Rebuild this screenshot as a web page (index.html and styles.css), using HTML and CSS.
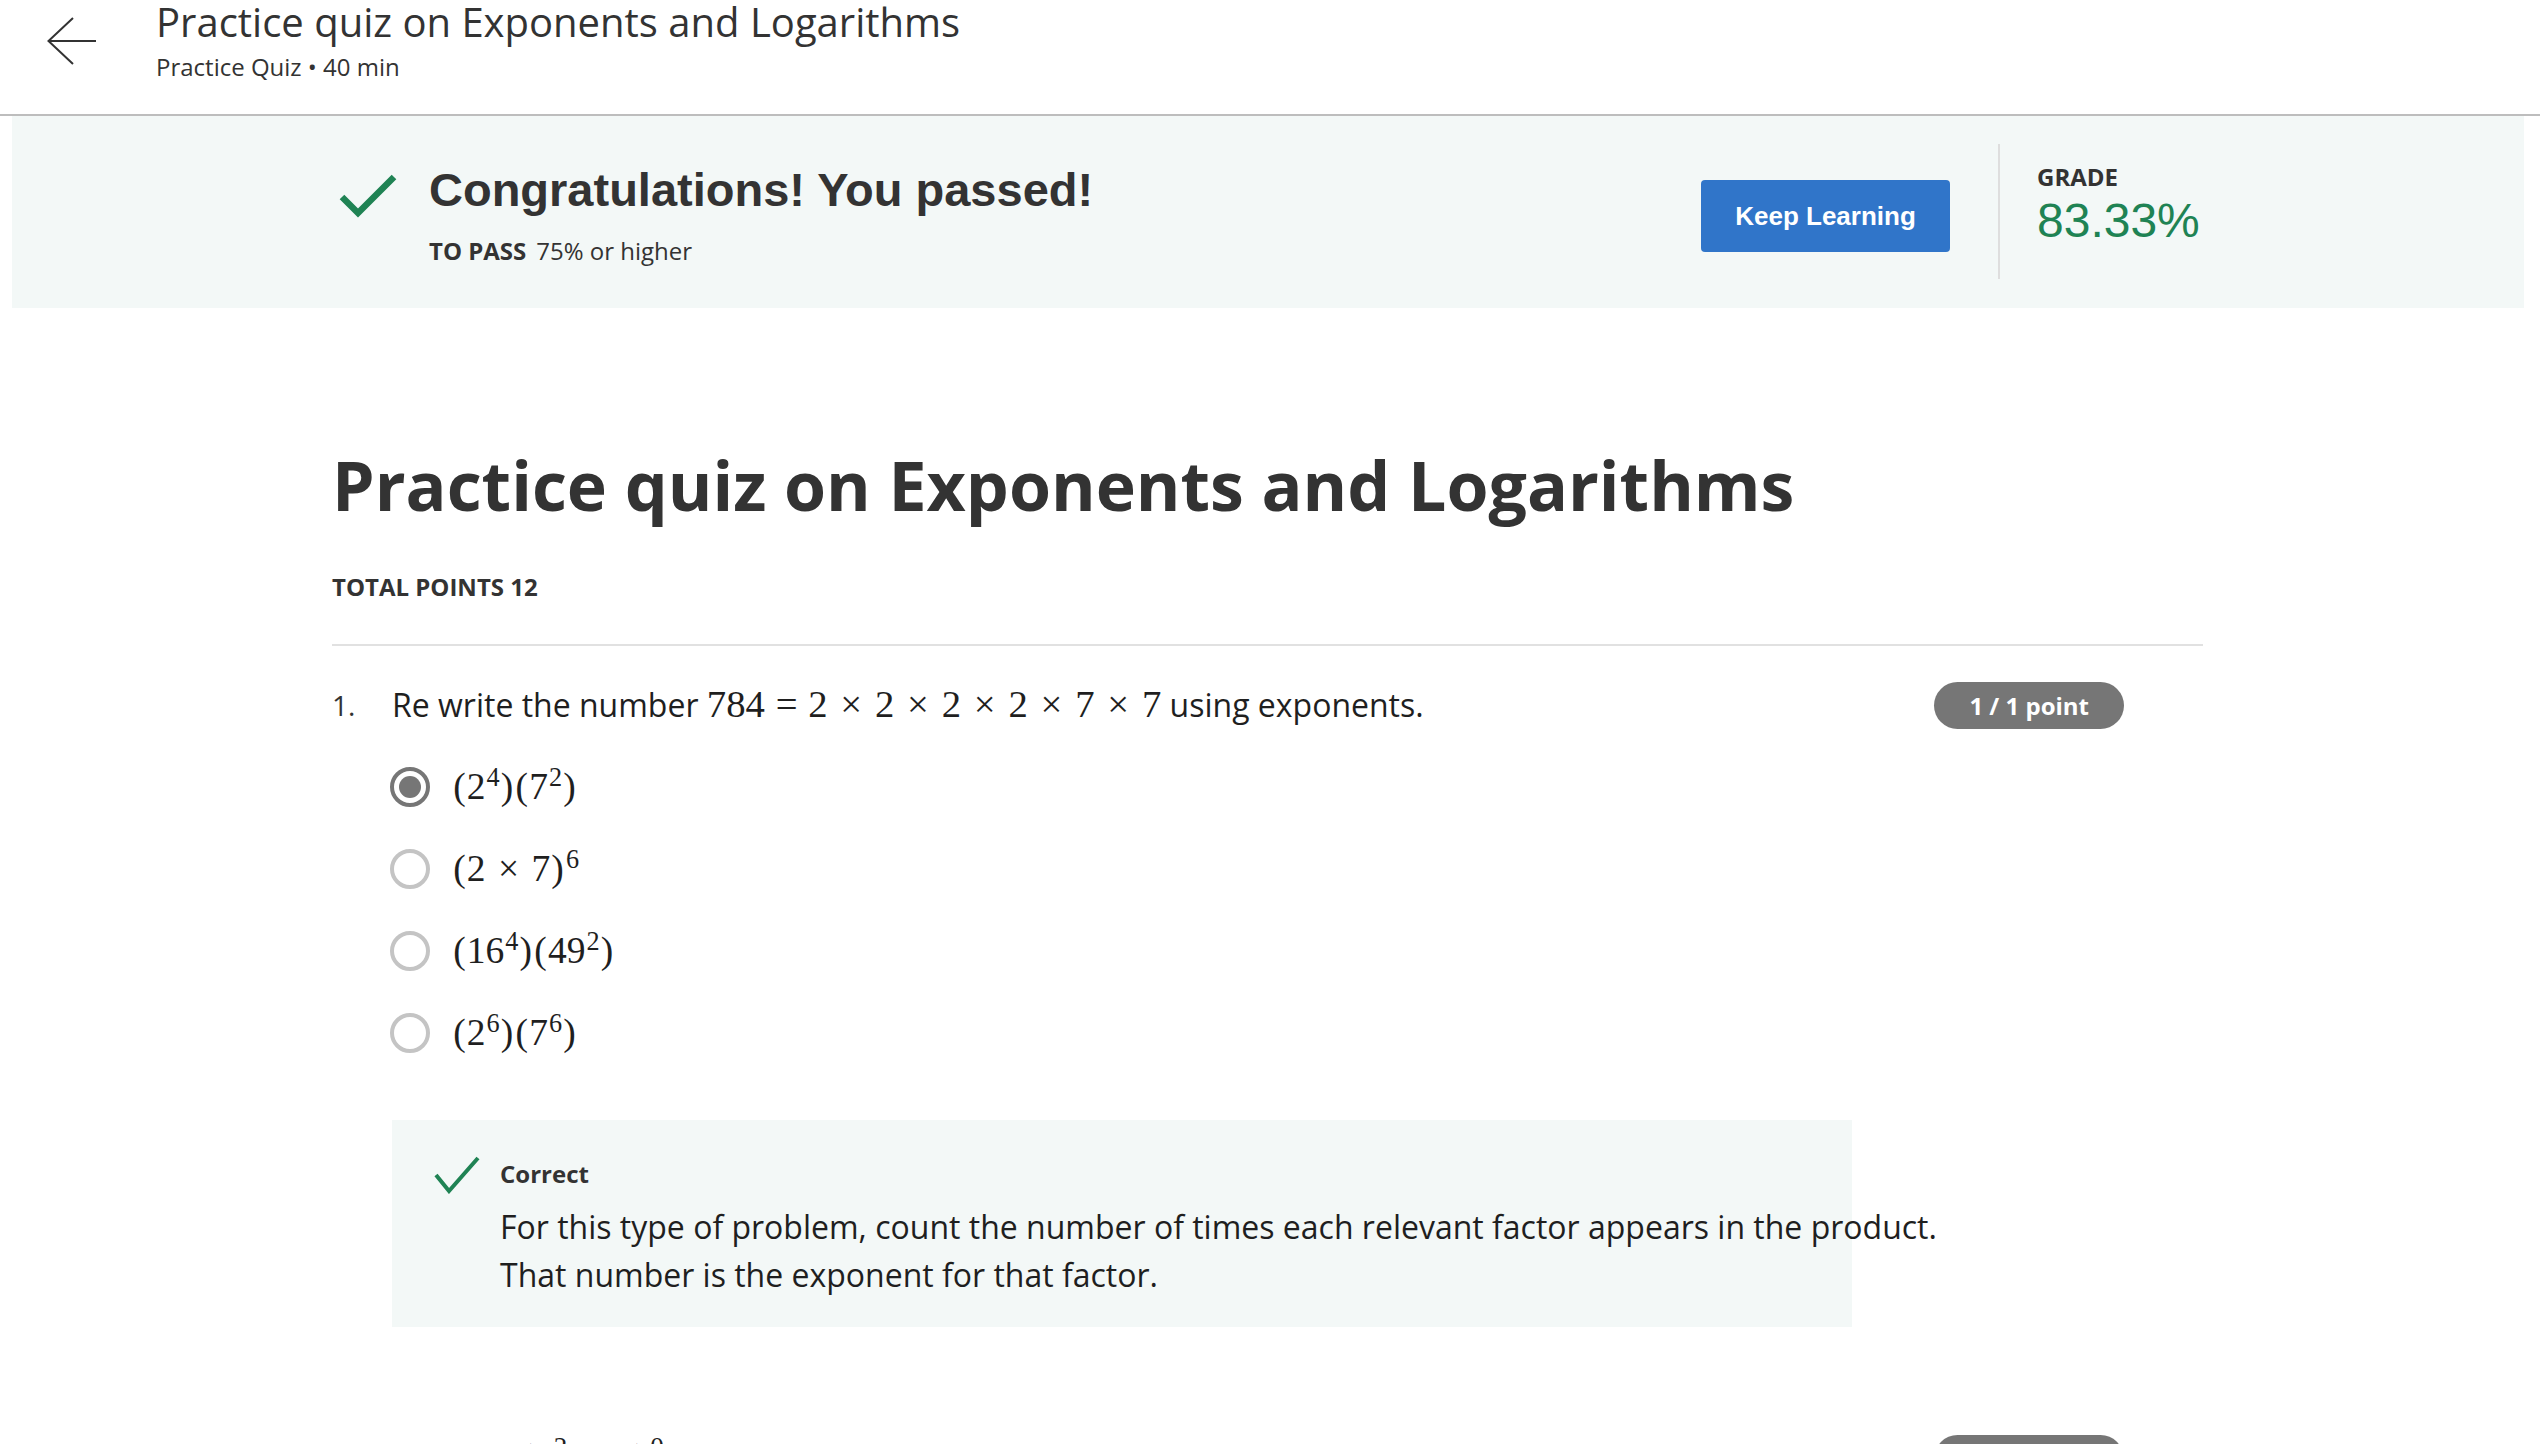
FILE: index.html
```html
<!DOCTYPE html>
<html lang="en">
<head>
<meta charset="utf-8">
<title>Practice quiz on Exponents and Logarithms</title>
<link rel="stylesheet" href="styles.css">
</head>
<body>
<header class="topbar">
  <a class="back" href="#" aria-label="Back">
    <svg width="50" height="48" viewBox="0 0 50 48"><path d="M1 24 H49 M26 1 L1.5 24 L26 47" fill="none" stroke="#333" stroke-width="2"/></svg>
  </a>
  <div class="topbar-text">
    <div class="topbar-title">Practice quiz on Exponents and Logarithms</div>
    <div class="topbar-sub">Practice Quiz • 40 min</div>
  </div>
</header>

<section class="banner">
  <div class="banner-inner">
    <svg class="pass-check" width="58" height="46" viewBox="0 0 58 46"><path d="M3 25 L19 41 L55 5" fill="none" stroke="#1f8354" stroke-width="6.5"/></svg>
    <div class="pass-text">
      <div class="pass-title">Congratulations! You passed!</div>
      <div class="pass-req"><b>TO PASS</b>75% or higher</div>
    </div>
    <button class="keep">Keep Learning</button>
    <div class="vdiv"></div>
    <div class="grade">
      <div class="grade-label">GRADE</div>
      <div class="grade-value">83.33%</div>
    </div>
  </div>
</section>

<main class="content">
  <h1 class="quiz-title">Practice quiz on Exponents and Logarithms</h1>
  <div class="total">TOTAL POINTS 12</div>
  <hr class="rule">

  <div class="question">
    <div class="q-head">
      <span class="q-num">1.</span>
      <div class="q-text">Re write the number <span class="m">784<span class="rel">=</span>2<span class="bin">×</span>2<span class="bin">×</span>2<span class="bin">×</span>2<span class="bin">×</span>7<span class="bin">×</span>7</span> using exponents.</div>
      <span class="badge">1 / 1 point</span>
    </div>
    <ul class="options">
      <li class="option"><span class="radio checked"></span><span class="m"><span class="p">(</span>2<sup>4</sup><span class="p">)</span><span class="p">(</span>7<sup>2</sup><span class="p">)</span></span></li>
      <li class="option"><span class="radio"></span><span class="m"><span class="p">(</span>2<span class="bin">×</span>7<span class="p">)</span><sup>6</sup></span></li>
      <li class="option"><span class="radio"></span><span class="m"><span class="p">(</span>16<sup>4</sup><span class="p">)</span><span class="p">(</span>49<sup>2</sup><span class="p">)</span></span></li>
      <li class="option"><span class="radio"></span><span class="m"><span class="p">(</span>2<sup>6</sup><span class="p">)</span><span class="p">(</span>7<sup>6</sup><span class="p">)</span></span></li>
    </ul>
    <div class="feedback">
      <svg class="fb-check" width="46" height="38" viewBox="0 0 46 38"><path d="M2 19 L15 35 L44 2" fill="none" stroke="#1f8354" stroke-width="4"/></svg>
      <div class="fb-body">
        <div class="fb-label">Correct</div>
        <p class="fb-text"><span>For this type of problem, count the number of times each relevant factor appears in the product.</span><span>That number is the exponent for that factor.</span></p>
      </div>
    </div>
  </div>

  <div class="question next">
    <div class="q-head">
      <span class="q-num">2.</span>
      <div class="q-text">Simplify <span class="m"><span class="p">(</span>5<sup>2</sup><span class="bin">×</span>3<span class="p">)</span><sup>0</sup></span></div>
      <span class="badge">1 / 1 point</span>
    </div>
  </div>
</main>
</body>
</html>
```

FILE: styles.css
```css
* { box-sizing: border-box; }
html, body { margin: 0; padding: 0; background: #fff; }
body {
  font-family: "Open Sans", "Liberation Sans", sans-serif;
  color: #1f1f1f;
  overflow: hidden;
}

/* top bar */
.topbar {
  height: 116px;
  border-bottom: 2px solid #bdbdbd;
  display: flex;
  align-items: flex-start;
  padding-left: 47px;
}
.back { display: block; margin-top: 17px; line-height: 0; }
.topbar-text { margin-left: 59px; }
.topbar-title {
  font-size: 40px;
  line-height: 54px;
  color: #333;
  margin-top: -5px;
}
.topbar-sub {
  margin-top: 2px;
  font-size: 24px;
  line-height: 32px;
  color: #333;
}

/* banner */
.banner {
  margin: 0 16px 0 12px;
  background: #f3f8f7;
  padding: 28px 0 29px;
}
.banner-inner {
  width: 1872px;
  margin: 0 auto;
  display: flex;
  align-items: flex-start;
  height: 135px;
}
.pass-check { flex: none; margin: 28px 0 0 7px; }
.pass-text { margin: 20px 0 0 32px; }
.pass-title {
  font-family: "Liberation Sans", Arial, sans-serif;
  font-weight: 700;
  font-size: 47px;
  line-height: 52px;
  color: #333;
}
.pass-req {
  margin-top: 20px;
  font-size: 24px;
  line-height: 30px;
  color: #333;
}
.pass-req b { font-weight: 700; margin-right: 10px; }
.keep {
  flex: none;
  margin: 36px 0 0 auto;
  width: 249px;
  height: 72px;
  border: 0;
  border-radius: 4px;
  background: #3075c9;
  color: #fff;
  font-family: "Liberation Sans", Arial, sans-serif;
  font-weight: 700;
  font-size: 26px;
  padding: 0;
}
.vdiv {
  flex: none;
  align-self: stretch;
  width: 2px;
  margin-left: 48px;
  background: #dedede;
}
.grade { flex: none; width: 167px; margin: 18px 0 0 37px; }
.grade-label {
  font-weight: 700;
  font-size: 24px;
  line-height: 30px;
  color: #333;
}
.grade-value {
  margin-top: 2px;
  font-family: "Liberation Sans", Arial, sans-serif;
  font-size: 48px;
  line-height: 54px;
  color: #1f8354;
}

/* content */
.content {
  width: 1871px;
  margin: 0 0 0 332px;
  padding-top: 131px;
}
.quiz-title {
  margin: 0;
  font-size: 68px;
  line-height: 92px;
  font-weight: 700;
  color: #333;
}
.total {
  margin-top: 40px;
  font-size: 24px;
  line-height: 31px;
  font-weight: 700;
  color: #333;
}
.rule {
  margin: 42px 0 0;
  border: 0;
  border-top: 2px solid #e1e1e1;
  height: 0;
}

.question { margin-top: 36px; }
.question.next { margin-top: 108px; }
.q-head { display: flex; align-items: flex-start; }
.q-num {
  flex: none;
  width: 60px;
  margin-top: 3px;
  font-size: 28px;
  line-height: 40px;
  color: #333;
}
.q-text {
  margin-top: 3px;
  font-size: 32px;
  line-height: 40px;
  color: #1f1f1f;
}
.badge {
  flex: none;
  margin: 0 79px 0 auto;
  height: 47px;
  padding: 0 35px;
  border-radius: 24px;
  background: #767676;
  color: #fff;
  font-weight: 700;
  font-size: 24px;
  line-height: 47px;
  white-space: nowrap;
}

.m {
  font-family: "Liberation Serif", "DejaVu Serif", serif;
  font-size: 1.21em;
  line-height: 1;
  color: #1f1f1f;
}
.m .rel { margin: 0 0.278em; }
.m .bin { margin: 0 0.33em; }
.m .p { padding: 0 0.03em; }
.m sup {
  font-size: 0.7em;
  vertical-align: 0.5em;
  line-height: 0;
  margin-left: 0.04em;
}

.options {
  list-style: none;
  margin: 17px 0 0;
  padding: 0 0 0 58px;
}
.option {
  height: 82px;
  display: flex;
  align-items: center;
  gap: 22px;
  font-size: 31px;
}
.radio {
  width: 40px;
  height: 40px;
  border: 4px solid #c4c4c4;
  border-radius: 50%;
  display: flex;
  align-items: center;
  justify-content: center;
  flex: none;
}
.radio.checked { border-color: #767676; }
.radio.checked::after {
  content: "";
  width: 22px;
  height: 22px;
  border-radius: 50%;
  background: #767676;
}

.feedback {
  margin: 46px 0 0 60px;
  width: 1460px;
  background: #f3f8f7;
  padding: 36px 0 28px 42px;
  display: flex;
  align-items: flex-start;
}
.fb-check { flex: none; }
.fb-body { flex: none; margin: 4px 0 0 20px; }
.fb-label {
  font-weight: 700;
  font-size: 24px;
  line-height: 28px;
  color: #333;
}
.fb-text {
  margin: 15px 0 0;
  font-size: 32px;
  line-height: 48px;
  color: #1f1f1f;
}
.fb-text span { display: block; white-space: nowrap; }
```
